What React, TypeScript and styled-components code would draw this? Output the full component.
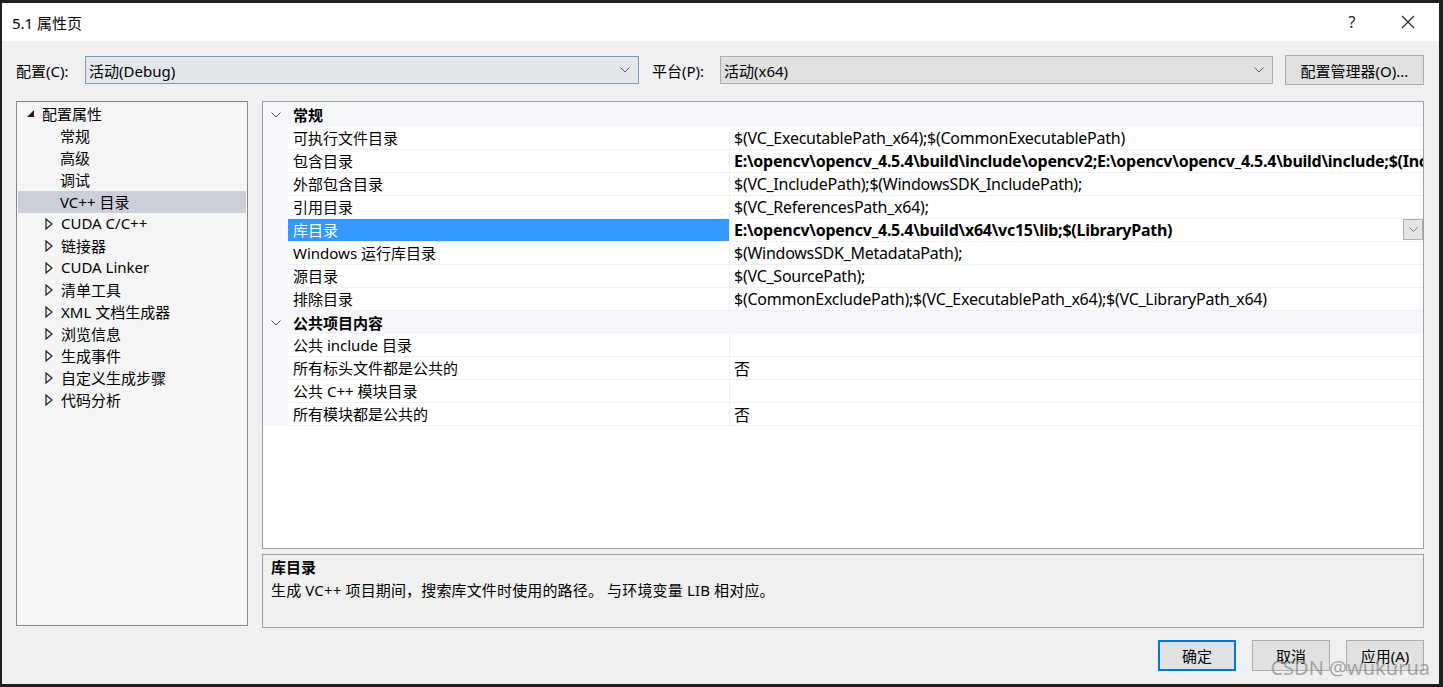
import React from "react";
import styled, { createGlobalStyle } from "styled-components";

const Global = createGlobalStyle`
  html, body { margin: 0; padding: 0; background: #1f1f1f; }
  body { font-family: "Noto Sans", "Noto Sans CJK SC", sans-serif; }
  * { box-sizing: border-box; }
`;

const FONT = `"Noto Sans", "Noto Sans CJK SC", sans-serif`;

const Screen = styled.div`
  width: 1443px;
  height: 687px;
  padding: 3px 4px 3px 2px;
  background: #1f1f1f;
  overflow: hidden;
`;

const Dialog = styled.div`
  position: relative;
  width: 1437px;
  height: 681px;
  background: #f0f0f0;
  display: flex;
  flex-direction: column;
  font-family: ${FONT};
  font-size: 15px;
  color: #000;
`;

const TitleBar = styled.div`
  height: 38px;
  background: #ffffff;
  display: flex;
  align-items: center;
  padding-left: 10px;
  padding-right: 3px;
`;

const Title = styled.div`
  flex: 1;
  font-size: 15px;
`;

const TitleButton = styled.div`
  width: 56px;
  height: 38px;
  display: flex;
  align-items: center;
  justify-content: center;
  font-size: 16px;
  color: #222;
`;

const Body = styled.div`
  flex: 1;
  display: flex;
  flex-direction: column;
  padding: 14px 15px 13px 14px;
`;

const ConfigRow = styled.div`
  height: 30px;
  display: flex;
  align-items: center;
`;

const Label = styled.span<{ $w: number; $pad: number }>`
  width: ${(p) => p.$w}px;
  padding-left: ${(p) => p.$pad}px;
  font-size: 15px;
  flex: none;
`;

const Combo = styled.div<{ $focus?: boolean; $w: number }>`
  width: ${(p) => p.$w}px;
  flex: none;
  height: 28px;
  display: flex;
  align-items: center;
  justify-content: space-between;
  padding: 0 8px 0 3px;
  background: ${(p) => (p.$focus ? "#e3e6ea" : "#e1e1e1")};
  border: 1px solid ${(p) => (p.$focus ? "#7a9cc2" : "#adadad")};
  font-size: 15px;
`;

const Button = styled.button<{ $default?: boolean; $w?: number; $h?: number }>`
  width: ${(p) => p.$w ?? 78}px;
  height: ${(p) => p.$h ?? 31}px;
  flex: none;
  background: #e1e1e1;
  border: ${(p) => (p.$default ? "2px solid #0078d7" : "1px solid #adadad")};
  font-family: ${FONT};
  font-size: 15px;
  color: #000;
  padding: 0;
`;

const Main = styled.div`
  margin-top: 16px;
  height: 527px;
  display: grid;
  grid-template-columns: 232px 1fr;
  column-gap: 14px;
`;

const Tree = styled.div`
  height: 525px;
  background: #f5f5f5;
  border: 1px solid #828790;
  padding: 1px 1px 0 1px;
`;

const TreeRow = styled.div<{ $level: number; $selected?: boolean }>`
  height: 22px;
  display: flex;
  align-items: center;
  padding-bottom: 2px;
  background: ${(p) => (p.$selected ? "#cccedb" : "transparent")};
  padding-left: ${(p) => (p.$level === 0 ? 9 : p.$level === 1 ? 27 : 42)}px;
  font-size: 15px;
  white-space: nowrap;
`;

const Expander = styled.span`
  width: 15px;
  display: inline-flex;
  align-items: center;
  padding-top: 1px;
`;

const TreeLabel = styled.span<{ $indent: number }>`
  margin-left: ${(p) => p.$indent}px;
`;

const RightCol = styled.div`
  display: flex;
  flex-direction: column;
  gap: 5px;
  min-width: 0;
`;

const Grid = styled.div`
  height: 448px;
  background: #ffffff;
  border: 1px solid #a0a0a0;
  overflow: hidden;
  display: flex;
  flex-direction: column;
`;

const CategoryRow = styled.div<{ $first?: boolean }>`
  height: ${(p) => (p.$first ? 25 : 23)}px;
  flex: none;
  display: flex;
  align-items: center;
  background: #f5f7fa;
  font-weight: bold;
  font-size: 15px;
`;

const CategoryLabel = styled.span`
  padding-left: 5px;
`;

const Gutter = styled.div`
  width: 25px;
  align-self: stretch;
  flex: none;
  display: flex;
  align-items: center;
  justify-content: center;
  background: #f5f7fa;
`;

const PropRow = styled.div`
  height: 23px;
  flex: none;
  display: flex;
`;

const NameCell = styled.div<{ $selected?: boolean }>`
  width: 442px;
  flex: none;
  height: 23px;
  padding: 0 0 1px 5px;
  display: flex;
  align-items: center;
  background: ${(p) => (p.$selected ? "#3399ff" : "#ffffff")};
  color: ${(p) => (p.$selected ? "#ffffff" : "#000")};
  border-bottom: 1px solid #f0f0f0;
  border-right: 1px solid #f0f0f0;
  white-space: nowrap;
  font-size: 15px;
`;

const ValueCell = styled.div<{ $bold?: boolean }>`
  flex: 1;
  min-width: 0;
  height: 23px;
  padding: 0 0 1px 4px;
  display: flex;
  align-items: center;
  justify-content: space-between;
  border-bottom: 1px solid #f0f0f0;
  white-space: nowrap;
  overflow: hidden;
  font-weight: ${(p) => (p.$bold ? "bold" : "normal")};
  font-size: 16px;
  letter-spacing: -0.25px;
`;

const ValueText = styled.span`
  overflow: hidden;
  flex: 1;
`;

const DropBtn = styled.div`
  width: 20px;
  height: 21px;
  flex: none;
  background: #e5e5e5;
  border: 1px solid #adadad;
  display: flex;
  align-items: center;
  justify-content: center;
`;

const Desc = styled.div`
  height: 74px;
  background: #f0f0f0;
  border: 1px solid #a0a0a0;
  padding: 1px 8px;
  display: flex;
  flex-direction: column;
  gap: 1px;
`;

const DescTitle = styled.div`
  font-weight: bold;
  font-size: 15px;
  height: 22px;
  line-height: 22px;
`;

const DescText = styled.div`
  font-size: 15px;
  line-height: 22px;
  letter-spacing: 0.15px;
`;

const Footer = styled.div`
  margin-top: 12px;
  display: flex;
  justify-content: flex-end;
  gap: 16px;
`;

const Spacer = styled.span<{ $w: number }>`
  width: ${(p) => p.$w}px;
  flex: none;
`;

const Watermark = styled.div`
  position: absolute;
  right: 9px;
  bottom: 3px;
  font-family: "Noto Sans", sans-serif;
  font-size: 20px;
  color: rgba(140, 140, 140, 0.75);
  pointer-events: none;
`;

const Chevron = ({ size = 10, color = "#555" }: { size?: number; color?: string }) => (
  <svg width={size} height={size * 0.6} viewBox="0 0 10 6">
    <path d="M0.5 0.5 L5 5 L9.5 0.5" fill="none" stroke={color} strokeWidth="1" />
  </svg>
);

const Expanded = () => (
  <svg width="8" height="8" viewBox="0 0 8 8">
    <path d="M7 0 L7 7 L0 7 Z" fill="#1e1e1e" />
  </svg>
);

const Collapsed = () => (
  <svg width="8" height="12" viewBox="0 0 8 12">
    <path d="M1 1 L7 6 L1 11 Z" fill="none" stroke="#1e1e1e" strokeWidth="1.2" />
  </svg>
);

const treeItems: { label: string; level: number; selected?: boolean; exp?: "open" | "closed" }[] = [
  { label: "配置属性", level: 0, exp: "open" },
  { label: "常规", level: 2 },
  { label: "高级", level: 2 },
  { label: "调试", level: 2 },
  { label: "VC++ 目录", level: 2, selected: true },
  { label: "CUDA C/C++", level: 1, exp: "closed" },
  { label: "链接器", level: 1, exp: "closed" },
  { label: "CUDA Linker", level: 1, exp: "closed" },
  { label: "清单工具", level: 1, exp: "closed" },
  { label: "XML 文档生成器", level: 1, exp: "closed" },
  { label: "浏览信息", level: 1, exp: "closed" },
  { label: "生成事件", level: 1, exp: "closed" },
  { label: "自定义生成步骤", level: 1, exp: "closed" },
  { label: "代码分析", level: 1, exp: "closed" },
];

type Prop = { name: string; value: string; bold?: boolean; selected?: boolean };

const general: Prop[] = [
  { name: "可执行文件目录", value: "$(VC_ExecutablePath_x64);$(CommonExecutablePath)" },
  {
    name: "包含目录",
    value:
      "E:\\opencv\\opencv_4.5.4\\build\\include\\opencv2;E:\\opencv\\opencv_4.5.4\\build\\include;$(IncludePath)",
    bold: true,
  },
  { name: "外部包含目录", value: "$(VC_IncludePath);$(WindowsSDK_IncludePath);" },
  { name: "引用目录", value: "$(VC_ReferencesPath_x64);" },
  {
    name: "库目录",
    value: "E:\\opencv\\opencv_4.5.4\\build\\x64\\vc15\\lib;$(LibraryPath)",
    bold: true,
    selected: true,
  },
  { name: "Windows 运行库目录", value: "$(WindowsSDK_MetadataPath);" },
  { name: "源目录", value: "$(VC_SourcePath);" },
  { name: "排除目录", value: "$(CommonExcludePath);$(VC_ExecutablePath_x64);$(VC_LibraryPath_x64)" },
];

const publicItems: Prop[] = [
  { name: "公共 include 目录", value: "" },
  { name: "所有标头文件都是公共的", value: "否" },
  { name: "公共 C++ 模块目录", value: "" },
  { name: "所有模块都是公共的", value: "否" },
];

const PropLine = ({ p }: { p: Prop }) => (
  <PropRow>
    <Gutter />
    <NameCell $selected={p.selected}>{p.name}</NameCell>
    <ValueCell $bold={p.bold}>
      <ValueText>{p.value}</ValueText>
      {p.selected && (
        <DropBtn>
          <Chevron size={9} color="#666" />
        </DropBtn>
      )}
    </ValueCell>
  </PropRow>
);

export default function App() {
  return (
    <>
      <Global />
      <Screen>
        <Dialog>
          <TitleBar>
            <Title>5.1 属性页</Title>
            <TitleButton>?</TitleButton>
            <TitleButton>
              <svg width="14" height="14" viewBox="0 0 14 14">
                <path d="M1 1 L13 13 M13 1 L1 13" stroke="#222" strokeWidth="1.1" />
              </svg>
            </TitleButton>
          </TitleBar>
          <Body>
            <ConfigRow>
              <Label $w={69} $pad={0}>配置(C):</Label>
              <Combo $focus $w={554}>
                <span>活动(Debug)</span>
                <Chevron />
              </Combo>
              <Label $w={81} $pad={13}>平台(P):</Label>
              <Combo $w={553}>
                <span>活动(x64)</span>
                <Chevron />
              </Combo>
              <Spacer $w={12} />
              <Button $w={139} $h={30}>配置管理器(O)...</Button>
            </ConfigRow>
            <Main>
              <Tree>
                {treeItems.map((t) => (
                  <TreeRow key={t.label} $level={t.level} $selected={t.selected}>
                    {t.exp && (
                      <Expander>{t.exp === "open" ? <Expanded /> : <Collapsed />}</Expander>
                    )}
                    <TreeLabel $indent={t.level === 1 ? 1 : 0}>{t.label}</TreeLabel>
                  </TreeRow>
                ))}
              </Tree>
              <RightCol>
                <Grid>
                  <CategoryRow $first>
                    <Gutter>
                      <Chevron size={10} color="#444" />
                    </Gutter>
                    <CategoryLabel>常规</CategoryLabel>
                  </CategoryRow>
                  {general.map((p) => (
                    <PropLine key={p.name} p={p} />
                  ))}
                  <CategoryRow>
                    <Gutter>
                      <Chevron size={10} color="#444" />
                    </Gutter>
                    <CategoryLabel>公共项目内容</CategoryLabel>
                  </CategoryRow>
                  {publicItems.map((p) => (
                    <PropLine key={p.name} p={p} />
                  ))}
                </Grid>
                <Desc>
                  <DescTitle>库目录</DescTitle>
                  <DescText>生成 VC++ 项目期间，搜索库文件时使用的路径。 与环境变量 LIB 相对应。</DescText>
                </Desc>
              </RightCol>
            </Main>
            <Footer>
              <Button $default>确定</Button>
              <Button>取消</Button>
              <Button>应用(A)</Button>
            </Footer>
          </Body>
          <Watermark>CSDN @wukurua</Watermark>
        </Dialog>
      </Screen>
    </>
  );
}
